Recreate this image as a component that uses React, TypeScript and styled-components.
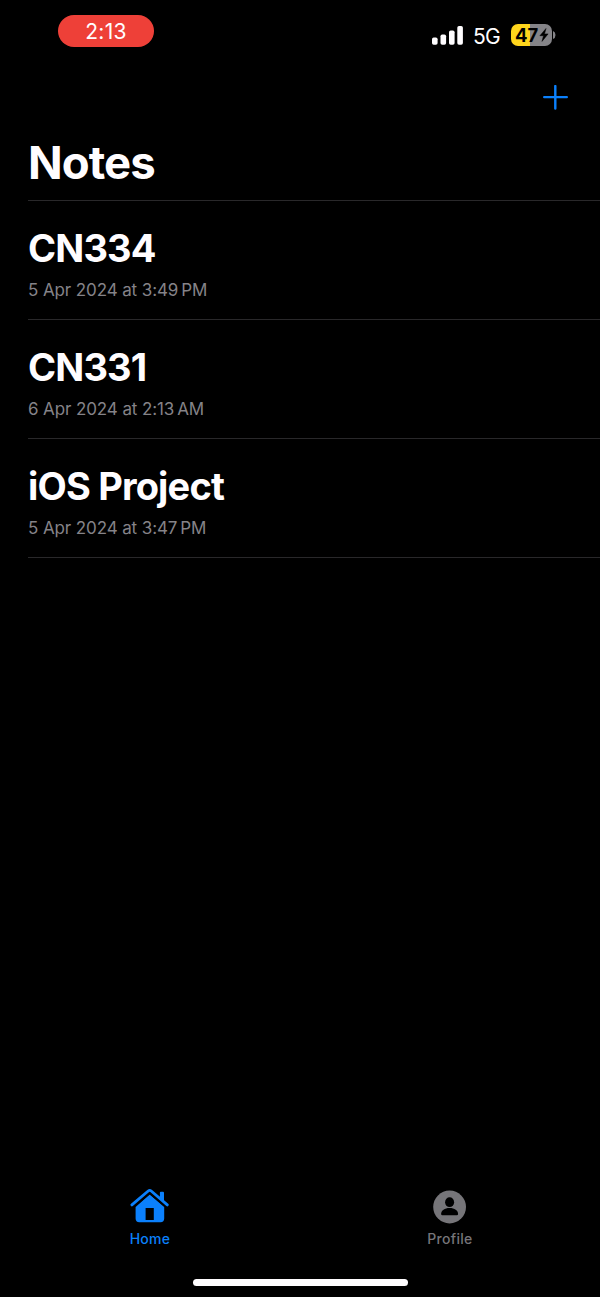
import React from 'react';
import styled, { createGlobalStyle } from 'styled-components';

const GlobalStyle = createGlobalStyle`
  * { box-sizing: border-box; }
  body { margin: 0; background: #000; }
`;

const Screen = styled.div`
  width: 600px;
  height: 1297px;
  display: flex;
  flex-direction: column;
  overflow: hidden;
  background: #000;
  color: #fffdff;
  font-family: Inter, 'Liberation Sans', sans-serif;
`;

const StatusBar = styled.header`
  height: 70px;
  flex: none;
  display: flex;
  justify-content: space-between;
  align-items: flex-start;
  padding: 15px 44px 0 58px;
`;

const TimePill = styled.time`
  width: 96px;
  height: 32px;
  border-radius: 16px;
  background: #ee4038;
  font-size: 21px;
  line-height: 33px;
  letter-spacing: 0.3px;
  text-align: center;
`;

const StatusIcons = styled.div`
  display: flex;
  align-items: center;
  height: 40px;
`;

const Network = styled.span`
  width: 28px;
  margin: 3px 10px 0 10px;
  font-size: 21px;
  line-height: 26px;
  letter-spacing: -0.7px;
  white-space: nowrap;
`;

const Battery = styled.div`
  display: flex;
  align-items: center;
  gap: 1px;
`;

const BatteryBody = styled.div`
  width: 41px;
  height: 22px;
  border-radius: 7px;
  display: flex;
  align-items: center;
  gap: 1px;
  padding-left: 4px;
  background: linear-gradient(to right, #ffd51c 19px, #858488 19px);
  color: #000;
  font-size: 18.5px;
  font-weight: 650;
  line-height: 22px;
  letter-spacing: -0.1px;
`;

const NavBar = styled.nav`
  height: 54px;
  flex: none;
  display: flex;
  justify-content: flex-end;
  align-items: center;
  padding-right: 32px;
`;

const AddButton = styled.button`
  display: flex;
  padding: 0;
  border: 0;
  background: none;
`;

const PageTitle = styled.h1`
  height: 76px;
  flex: none;
  margin: 0;
  padding: 1px 0 0 28px;
  font-size: 45.5px;
  font-weight: 700;
  line-height: 76px;
  letter-spacing: -0.9px;
`;

const NoteList = styled.ul`
  flex: 1;
  margin: 0 0 0 28px;
  padding: 0;
  list-style: none;
  border-top: 1px solid #29282a;
`;

const NoteRow = styled.li`
  height: 119px;
  padding-top: 24px;
  border-bottom: 1px solid #29282a;
`;

const NoteTitle = styled.h2`
  margin: 0;
  font-size: 38px;
  font-weight: 700;
  line-height: 46px;
  letter-spacing: -0.83px;
`;

const NoteDate = styled.p`
  margin: 7px 0 0;
  color: #858388;
  font-size: 17px;
  line-height: 24px;
  letter-spacing: -0.11px;
`;

const TabBar = styled.nav`
  height: 91px;
  flex: none;
  display: flex;
`;

const Tab = styled.a<{ $active?: boolean }>`
  flex: 1;
  display: flex;
  flex-direction: column;
  align-items: center;
  color: ${(p) => (p.$active ? '#0b80fc' : '#767579')};
  font-size: 14px;
  font-weight: 500;
  line-height: 18px;
  letter-spacing: 0.3px;

  svg { margin-bottom: 6px; }
`;

const HomeIndicator = styled.div`
  width: 215px;
  height: 7px;
  flex: none;
  align-self: center;
  margin-bottom: 11px;
  border-radius: 4px;
  background: #fffdff;
`;

const notes = [
  { title: 'CN334', date: '5 Apr 2024 at 3:49\u2009PM' },
  { title: 'CN331', date: '6 Apr 2024 at 2:13\u2009AM' },
  { title: 'iOS Project', date: '5 Apr 2024 at 3:47\u2009PM' },
];

const SignalIcon = () => (
  <svg width="31" height="19" viewBox="0 0 31 19" fill="#fffdff">
    <rect x="0" y="11.5" width="5.6" height="7.2" rx="1.7" />
    <rect x="8.5" y="8.5" width="5.6" height="10.2" rx="1.7" />
    <rect x="17" y="4.5" width="5.6" height="14.2" rx="1.7" />
    <rect x="25.3" y="0" width="5.6" height="18.7" rx="1.7" />
  </svg>
);

const BoltIcon = () => (
  <svg width="10" height="14" viewBox="0 0 9 14" fill="#000" stroke="#000" strokeWidth="0.5" strokeLinejoin="round">
    <path d="M6.5 0.5 0.4 7.7H4L2.5 13.4 8.6 5.9H5z" />
  </svg>
);

const PlusIcon = () => (
  <svg width="25" height="25" viewBox="0 0 25 25" stroke="#0b80fc" strokeWidth="2.4" strokeLinecap="round">
    <path d="M12.3 1v22.6M1.2 12.1h22.6" />
  </svg>
);

const HouseIcon = () => (
  <svg width="40" height="36" viewBox="0 0 40 36">
    <path
      fillRule="evenodd"
      fill="currentColor"
      d="M19.7 6.6 34.2 19V30.6q0 3.7-3.7 3.7H9.3q-3.7 0-3.7-3.7V19zM15.6 20V32H23.8V20z"
    />
    <path d="M2 18.2 18.3 4.4q1.4-1.1 2.8 0L37.4 18.2" fill="none" stroke="#000" strokeWidth="4.8" />
    <path d="M29.9 4.7q0-1 1-1h2.1q1 0 1 1V14.4l-4.1-3.5z" fill="currentColor" />
    <path
      d="M1.9 16.9 18.2 3q1.5-1.2 3 0L37.3 16.9"
      fill="none"
      stroke="currentColor"
      strokeWidth="2.8"
      strokeLinecap="round"
      strokeLinejoin="round"
    />
  </svg>
);

const PersonIcon = () => (
  <svg width="34" height="36" viewBox="0 0 34 36">
    <circle cx="16.6" cy="19" r="16.4" fill="currentColor" />
    <ellipse cx="16.6" cy="14.2" rx="4.5" ry="4.9" fill="#000" />
    <path d="M8.1 26c0-3.5 3.6-6 8.5-6s8.5 2.5 8.5 6q0 1.3-1.3 1.3H9.4Q8.1 27.3 8.1 26z" fill="#000" />
  </svg>
);

export default function App() {
  return (
    <Screen>
      <GlobalStyle />
      <StatusBar>
        <TimePill>2:13</TimePill>
        <StatusIcons>
          <SignalIcon />
          <Network>5G</Network>
          <Battery>
            <BatteryBody>
              47
              <BoltIcon />
            </BatteryBody>
            <svg width="3" height="8" viewBox="0 0 3 8">
              <path d="M0 0q2.5 1 2.5 4T0 8z" fill="#858488" />
            </svg>
          </Battery>
        </StatusIcons>
      </StatusBar>
      <NavBar>
        <AddButton aria-label="Add note">
          <PlusIcon />
        </AddButton>
      </NavBar>
      <PageTitle>Notes</PageTitle>
      <NoteList>
        {notes.map((note) => (
          <NoteRow key={note.title}>
            <NoteTitle>{note.title}</NoteTitle>
            <NoteDate>{note.date}</NoteDate>
          </NoteRow>
        ))}
      </NoteList>
      <TabBar>
        <Tab $active>
          <HouseIcon />
          Home
        </Tab>
        <Tab>
          <PersonIcon />
          Profile
        </Tab>
      </TabBar>
      <HomeIndicator />
    </Screen>
  );
}
